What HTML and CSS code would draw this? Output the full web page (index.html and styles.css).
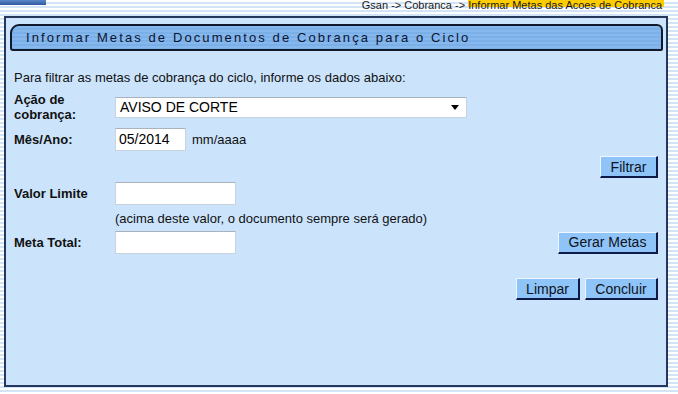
FILE: index.html
```html
<!DOCTYPE html>
<html lang="pt">
<head>
<meta charset="utf-8">
<title>Informar Metas de Documentos de Cobrança</title>
<link rel="stylesheet" href="styles.css">
</head>
<body>
<div class="topbar">
  <div class="logo-strip"></div>
  <div class="crumbs">Gsan -&gt; Cobranca -&gt; <span class="crumb-current">Informar Metas das Acoes de Cobranca</span></div>
</div>
<div class="panel">
  <div class="tab-title">Informar Metas de Documentos de Cobrança para o Ciclo</div>
  <div class="form">
    <p class="intro">Para filtrar as metas de cobrança do ciclo, informe os dados abaixo:</p>
    <div class="row row-acao">
      <div class="label">Ação de<br>cobrança:</div>
      <div class="select">
        <span class="select-text">AVISO DE CORTE</span>
        <svg class="select-arrow" width="8" height="5" viewBox="0 0 8 5"><path d="M0 0h8L4 5z" fill="#000"/></svg>
      </div>
    </div>
    <div class="row row-mes">
      <div class="label">Mês/Ano:</div>
      <div class="input input-mes">05/2014</div>
      <span class="hint">mm/aaaa</span>
    </div>
    <div class="row row-filtrar">
      <button class="btn btn-filtrar">Filtrar</button>
    </div>
    <div class="row row-valor">
      <div class="label">Valor Limite</div>
      <div class="input input-num"></div>
    </div>
    <div class="note">(acima deste valor, o documento sempre será gerado)</div>
    <div class="row row-meta">
      <div class="label">Meta Total:</div>
      <div class="input input-num"></div>
      <div class="spacer"></div>
      <button class="btn btn-gerar">Gerar Metas</button>
    </div>
    <div class="row row-actions">
      <button class="btn btn-limpar">Limpar</button>
      <button class="btn btn-concluir">Concluir</button>
    </div>
  </div>
</div>
</body>
</html>
```
FILE: styles.css
```css
html, body {
  margin: 0;
  padding: 0;
}
body {
  width: 678px;
  height: 394px;
  overflow: hidden;
  font-family: "Liberation Sans", Arial, sans-serif;
  color: #000;
  background: repeating-linear-gradient(to bottom, #ffffff 0 2px, #d2e5f6 2px 4px);
}
.topbar {
  position: relative;
  height: 16px;
}
.logo-strip {
  width: 46px;
  height: 5px;
  background: linear-gradient(#5b86c8, #2f5aa2);
}
.crumbs {
  position: absolute;
  top: -1px;
  right: 14px;
  font-size: 11px;
  line-height: 12px;
  color: #1a1a1a;
  white-space: nowrap;
}
.crumb-current {
  background: linear-gradient(#ffcc00 0 8px, transparent 8px);
  padding-right: 2px;
}
.panel {
  margin-left: 4px;
  width: 660px;
  height: 367px;
  border: 2px solid #25375a;
  background: #cbe4fc;
  box-sizing: content-box;
}
.tab-title {
  margin: 6px 3px 0 4px;
  height: 23px;
  border: 2px solid #111a2c;
  border-radius: 9px 6px 2px 3px;
  background: repeating-linear-gradient(to bottom, #86b8ee 0 2px, #7aafe8 2px 4px);
  color: #0c1330;
  font-size: 13px;
  letter-spacing: 2.1px;
  line-height: 23px;
  padding-left: 14px;
  white-space: nowrap;
}
.form {
  padding: 0 8px 0 8px;
}
.intro {
  margin: 19px 0 0 0;
  font-size: 13px;
  line-height: 16px;
  color: #111;
}
.row {
  display: flex;
  align-items: center;
}
.label {
  width: 101px;
  flex: none;
  font-size: 13px;
  font-weight: bold;
  line-height: 15px;
  color: #111;
}
.row-acao {
  margin-top: 6px;
  height: 30px;
}
.select {
  width: 340px;
  height: 19px;
  border: 1px solid #c9d3dd;
  border-top-color: #a9b3bd;
  background: #fff;
  display: flex;
  align-items: center;
  padding: 0 6px 0 4px;
  box-sizing: content-box;
  margin-top: 1px;
}
.select-text {
  flex: 1;
  font-size: 14px;
  line-height: 19px;
}
.select-arrow {
  display: block;
  margin-right: 1px;
}
.input {
  height: 21px;
  border: 1px solid #c9d3dd;
  border-top-color: #a9b3bd;
  background: #fff;
  font-size: 14px;
  line-height: 21px;
  padding-left: 3px;
  box-sizing: content-box;
}
.row-mes {
  margin-top: 6px;
  height: 23px;
}
.input-mes {
  width: 66px;
}
.hint {
  margin-left: 6px;
  font-size: 13px;
  color: #111;
}
.row-filtrar {
  margin-top: 5px;
  justify-content: flex-end;
}
.btn {
  height: 22px;
  padding: 0;
  font-family: "Liberation Sans", Arial, sans-serif;
  font-size: 14px;
  color: #0e1220;
  background: #8ec4f8;
  border-style: solid;
  border-width: 1px 2px 2px 1px;
  border-color: #eef6ff #0d1a48 #0d1a48 #eef6ff;
  box-sizing: border-box;
  text-align: center;
}
.btn-filtrar { width: 58px; }
.btn-gerar { width: 100px; }
.btn-limpar { width: 64px; }
.btn-concluir { width: 73px; margin-left: 5px; }
.row-valor {
  margin-top: 4px;
  height: 23px;
}
.input-num {
  width: 116px;
}
.note {
  margin: 6px 0 0 101px;
  font-size: 13px;
  line-height: 16px;
  color: #111;
}
.row-meta {
  margin-top: 4px;
  height: 23px;
}
.spacer { flex: 1; }
.row-actions {
  margin-top: 24px;
  justify-content: flex-end;
}
```
